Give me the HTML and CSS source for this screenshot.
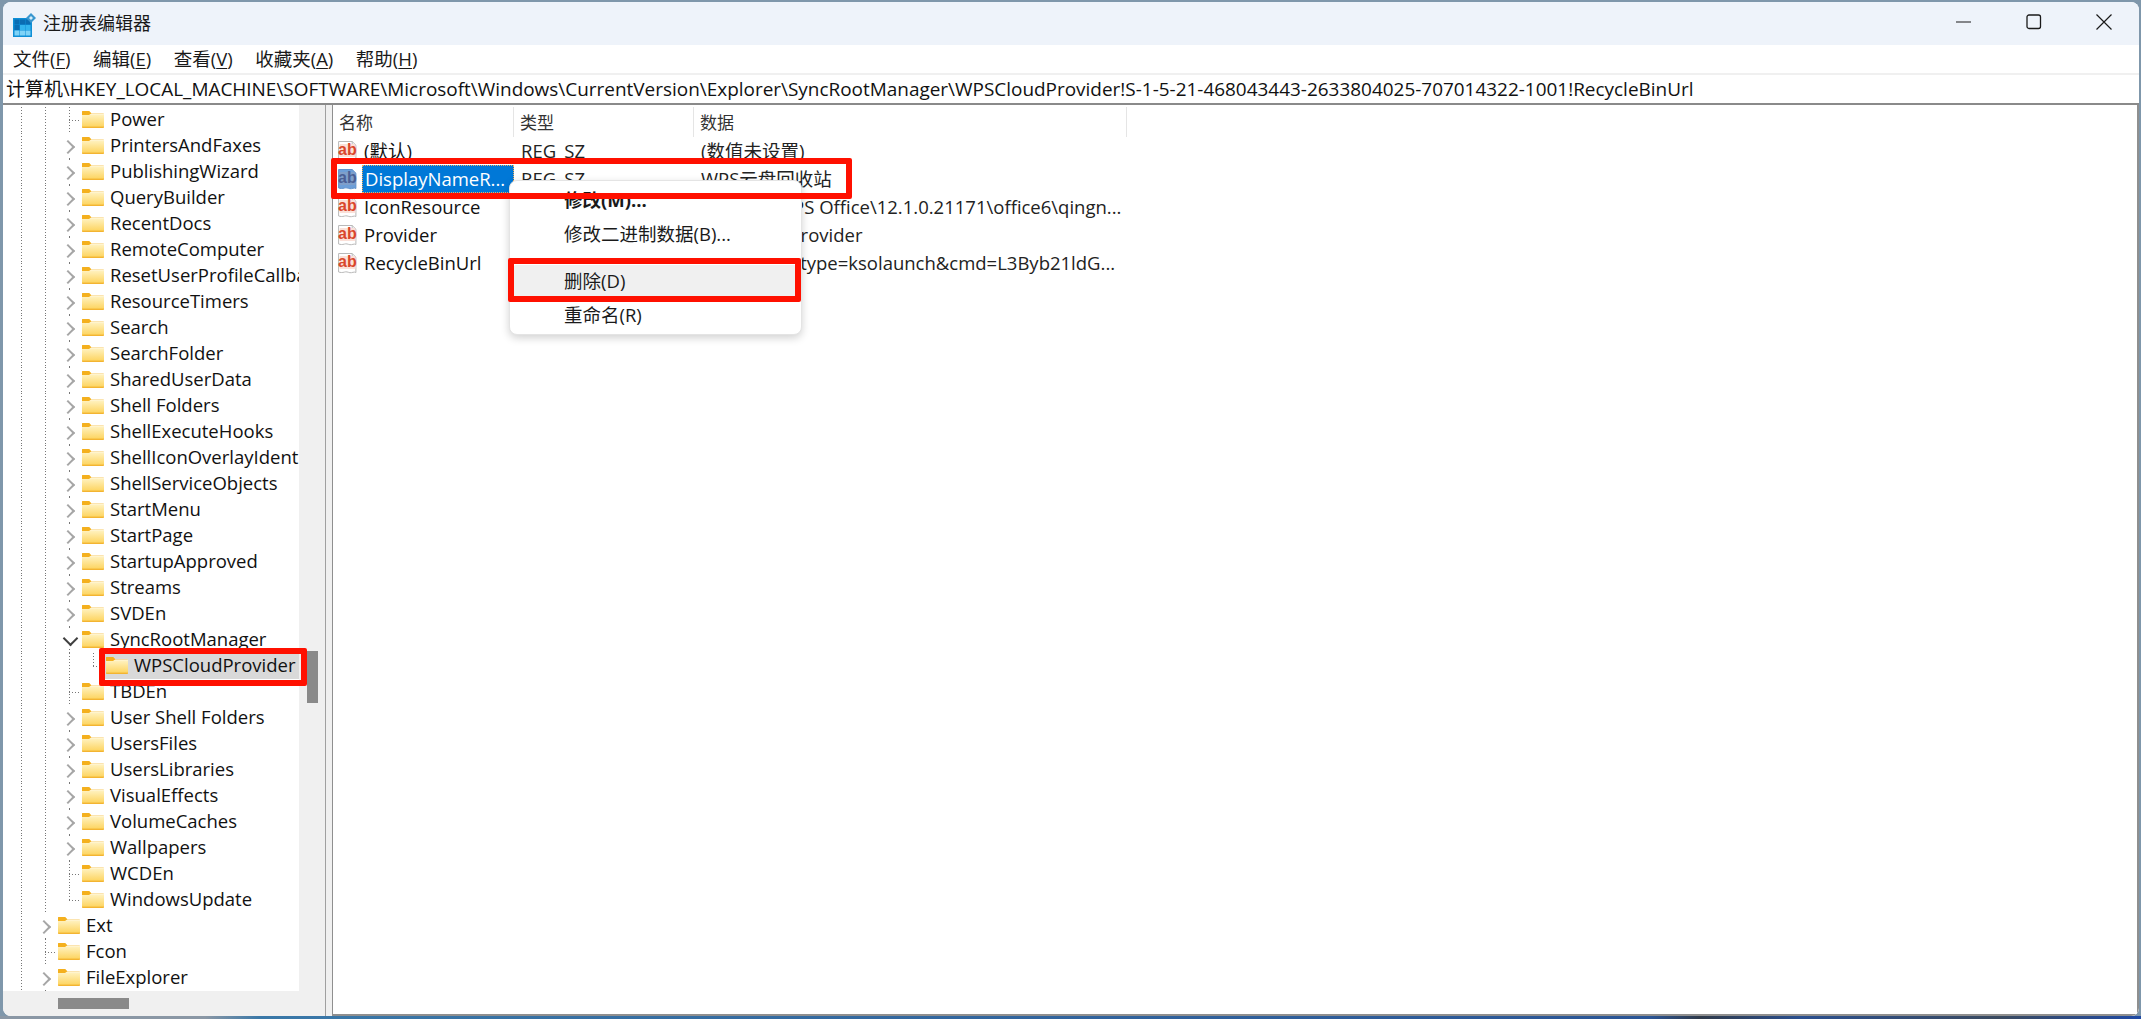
FILE: index.html
```html
<!DOCTYPE html>
<html lang="zh-CN">
<head>
<meta charset="utf-8">
<title>注册表编辑器</title>
<link rel="stylesheet" href="styles.css">
</head>
<body>
<svg class="defs" width="0" height="0" aria-hidden="true">
  <defs>
    <linearGradient id="fg" x1="0" y1="0" x2="0" y2="1">
      <stop offset="0" stop-color="#fff3c4"/>
      <stop offset="1" stop-color="#fdd562"/>
    </linearGradient>
    <symbol id="folder" viewBox="0 0 22 17">
      <path d="M0 1.2C0 .5.5 0 1.2 0H7l2.4 2.4H21c.6 0 1 .4 1 1V16c0 .6-.4 1-1 1H1c-.6 0-1-.4-1-1Z" fill="#f3b431"/>
      <rect x="0" y="3" width="22" height="12.6" fill="url(#fg)"/>
      <rect x="0" y="2.6" width="22" height="1" fill="#fff6d8"/>
      <path d="M0 1.2C0 .5.5 0 1.2 0H7l2.4 2.4H9L7 4H0Z" fill="#f4b01e"/>
    </symbol>
    <symbol id="regsz" viewBox="0 0 19 22">
      <path d="M.6 1.500h13.600l3.700 3.700v15.300c-2-1.200-3.800.6-6 .2-2.300-.5-3.500-1.300-5.500-.6-2 .6-4 .5-5.800-.1Z" fill="#fff" stroke="#b9b9b9"/>
      <path d="M14.200 1.500v3.700h3.700" fill="none" stroke="#b9b9b9"/>
      <rect x="1.500" y="4" width="16" height="13" rx="1" fill="#fbe0d8"/>
    </symbol>
    <symbol id="regsel" viewBox="0 0 19 22">
      <path d="M.6 1.500h13.600l3.700 3.700v15.300c-2-1.200-3.800.6-6 .2-2.300-.5-3.500-1.300-5.500-.6-2 .6-4 .5-5.800-.1Z" fill="#6d9fd8" stroke="#5f91cc"/>
      <rect x="1.500" y="4" width="16" height="13" rx="1" fill="#7f9fca"/>
    </symbol>
  </defs>
</svg>

<div class="window">
  <header class="titlebar">
    <svg class="app-icon" viewBox="0 0 23 24" width="23" height="24">
      <rect x="0" y="5" width="19" height="19" fill="#0f8fd6"/>
      <g fill="#0b6db3">
        <rect x="1.500" y="6.500" width="5" height="5"/><rect x="7" y="6.500" width="5" height="5"/><rect x="12.500" y="6.500" width="5" height="5"/>
        <rect x="1.500" y="12" width="5" height="5"/>
      </g>
      <g fill="#33b4ee">
        <rect x="7" y="12" width="5" height="5"/><rect x="12.500" y="12" width="5" height="5"/>
      </g>
      <g fill="#7fd3f7">
        <rect x="1.500" y="17.500" width="5" height="5"/><rect x="7" y="17.500" width="5" height="5"/><rect x="12.500" y="17.500" width="5" height="5"/>
      </g>
      <path d="M18 0l5 5-5 5-5-5Z" fill="#3a97cf"/>
      <path d="M18 3l2 2-2 2-2-2Z" fill="#d6eefa"/>
    </svg>
    <span class="title-text">注册表编辑器</span>
    <div class="caption">
      <svg class="cap-btn" viewBox="0 0 16 16" width="16" height="16"><path d="M0 8h15" stroke="#1a1a1a" stroke-width="1.200"/></svg>
      <svg class="cap-btn" viewBox="0 0 16 16" width="16" height="16"><rect x="1" y="1" width="13.500" height="13.500" rx="2" fill="none" stroke="#1a1a1a" stroke-width="1.300"/></svg>
      <svg class="cap-btn" viewBox="0 0 16 16" width="16" height="16"><path d="M.5.5l15 15M15.500.5l-15 15" stroke="#1a1a1a" stroke-width="1.200"/></svg>
    </div>
  </header>

  <nav class="menubar">
    <span>文件(<u>F</u>)</span>
    <span>编辑(<u>E</u>)</span>
    <span>查看(<u>V</u>)</span>
    <span>收藏夹(<u>A</u>)</span>
    <span>帮助(<u>H</u>)</span>
  </nav>

  <div class="address">计算机\HKEY_LOCAL_MACHINE\SOFTWARE\Microsoft\Windows\CurrentVersion\Explorer\SyncRootManager\WPSCloudProvider!S-1-5-21-468043443-2633804025-707014322-1001!RecycleBinUrl</div>

  <main class="panes">
    <section class="tree-pane">
      <div class="tree-top">
        <div class="tree" id="tree">
          <div class="row"><i class="g"></i><i class="g"></i><i class="t leaf"></i><svg class="fld"><use href="#folder"/></svg><span>Power</span></div>
          <div class="row"><i class="g"></i><i class="g"></i><i class="t closed"></i><svg class="fld"><use href="#folder"/></svg><span>PrintersAndFaxes</span></div>
          <div class="row"><i class="g"></i><i class="g"></i><i class="t closed"></i><svg class="fld"><use href="#folder"/></svg><span>PublishingWizard</span></div>
          <div class="row"><i class="g"></i><i class="g"></i><i class="t closed"></i><svg class="fld"><use href="#folder"/></svg><span>QueryBuilder</span></div>
          <div class="row"><i class="g"></i><i class="g"></i><i class="t closed"></i><svg class="fld"><use href="#folder"/></svg><span>RecentDocs</span></div>
          <div class="row"><i class="g"></i><i class="g"></i><i class="t closed"></i><svg class="fld"><use href="#folder"/></svg><span>RemoteComputer</span></div>
          <div class="row"><i class="g"></i><i class="g"></i><i class="t closed"></i><svg class="fld"><use href="#folder"/></svg><span>ResetUserProfileCallback</span></div>
          <div class="row"><i class="g"></i><i class="g"></i><i class="t closed"></i><svg class="fld"><use href="#folder"/></svg><span>ResourceTimers</span></div>
          <div class="row"><i class="g"></i><i class="g"></i><i class="t closed"></i><svg class="fld"><use href="#folder"/></svg><span>Search</span></div>
          <div class="row"><i class="g"></i><i class="g"></i><i class="t closed"></i><svg class="fld"><use href="#folder"/></svg><span>SearchFolder</span></div>
          <div class="row"><i class="g"></i><i class="g"></i><i class="t closed"></i><svg class="fld"><use href="#folder"/></svg><span>SharedUserData</span></div>
          <div class="row"><i class="g"></i><i class="g"></i><i class="t closed"></i><svg class="fld"><use href="#folder"/></svg><span>Shell Folders</span></div>
          <div class="row"><i class="g"></i><i class="g"></i><i class="t closed"></i><svg class="fld"><use href="#folder"/></svg><span>ShellExecuteHooks</span></div>
          <div class="row"><i class="g"></i><i class="g"></i><i class="t closed"></i><svg class="fld"><use href="#folder"/></svg><span>ShellIconOverlayIdentifiers</span></div>
          <div class="row"><i class="g"></i><i class="g"></i><i class="t closed"></i><svg class="fld"><use href="#folder"/></svg><span>ShellServiceObjects</span></div>
          <div class="row"><i class="g"></i><i class="g"></i><i class="t closed"></i><svg class="fld"><use href="#folder"/></svg><span>StartMenu</span></div>
          <div class="row"><i class="g"></i><i class="g"></i><i class="t closed"></i><svg class="fld"><use href="#folder"/></svg><span>StartPage</span></div>
          <div class="row"><i class="g"></i><i class="g"></i><i class="t closed"></i><svg class="fld"><use href="#folder"/></svg><span>StartupApproved</span></div>
          <div class="row"><i class="g"></i><i class="g"></i><i class="t closed"></i><svg class="fld"><use href="#folder"/></svg><span>Streams</span></div>
          <div class="row"><i class="g"></i><i class="g"></i><i class="t closed"></i><svg class="fld"><use href="#folder"/></svg><span>SVDEn</span></div>
          <div class="row"><i class="g"></i><i class="g"></i><i class="t open"></i><svg class="fld"><use href="#folder"/></svg><span>SyncRootManager</span></div>
          <div class="row selected-row"><i class="g"></i><i class="g"></i><i class="g"></i><i class="t last"></i><span class="sel"><svg class="fld"><use href="#folder"/></svg><span>WPSCloudProvider</span></span></div>
          <div class="row"><i class="g"></i><i class="g"></i><i class="t leaf"></i><svg class="fld"><use href="#folder"/></svg><span>TBDEn</span></div>
          <div class="row"><i class="g"></i><i class="g"></i><i class="t closed"></i><svg class="fld"><use href="#folder"/></svg><span>User Shell Folders</span></div>
          <div class="row"><i class="g"></i><i class="g"></i><i class="t closed"></i><svg class="fld"><use href="#folder"/></svg><span>UsersFiles</span></div>
          <div class="row"><i class="g"></i><i class="g"></i><i class="t closed"></i><svg class="fld"><use href="#folder"/></svg><span>UsersLibraries</span></div>
          <div class="row"><i class="g"></i><i class="g"></i><i class="t closed"></i><svg class="fld"><use href="#folder"/></svg><span>VisualEffects</span></div>
          <div class="row"><i class="g"></i><i class="g"></i><i class="t closed"></i><svg class="fld"><use href="#folder"/></svg><span>VolumeCaches</span></div>
          <div class="row"><i class="g"></i><i class="g"></i><i class="t closed"></i><svg class="fld"><use href="#folder"/></svg><span>Wallpapers</span></div>
          <div class="row"><i class="g"></i><i class="g"></i><i class="t leaf"></i><svg class="fld"><use href="#folder"/></svg><span>WCDEn</span></div>
          <div class="row"><i class="g"></i><i class="g"></i><i class="t last"></i><svg class="fld"><use href="#folder"/></svg><span>WindowsUpdate</span></div>
          <div class="row"><i class="g"></i><i class="t closed"></i><svg class="fld"><use href="#folder"/></svg><span>Ext</span></div>
          <div class="row"><i class="g"></i><i class="t leaf"></i><svg class="fld"><use href="#folder"/></svg><span>Fcon</span></div>
          <div class="row"><i class="g"></i><i class="t closed"></i><svg class="fld"><use href="#folder"/></svg><span>FileExplorer</span></div>
        </div>
        <div class="vscroll"><div class="vthumb"></div></div>
      </div>
      <div class="hscroll"><div class="hthumb"></div></div>
    </section>

    <div class="splitter"></div>

    <section class="list-pane">
      <div class="list-head">
        <div class="col c1">名称</div>
        <div class="col c2">类型</div>
        <div class="col c3">数据</div>
      </div>
      <div class="lrow">
        <div class="c1 nm"><span class="reg"><svg><use href="#regsz"/></svg><b>ab</b></span><span class="nm-t">(默认)</span></div>
        <div class="c2 v">REG_SZ</div><div class="c3 v">(数值未设置)</div>
      </div>
      <div class="lrow">
        <div class="c1 nm"><span class="reg regsel"><svg><use href="#regsel"/></svg><b>ab</b></span><span class="nm-t picked">DisplayNameR...</span></div>
        <div class="c2 v">REG_SZ</div><div class="c3 v">WPS云盘回收站</div>
      </div>
      <div class="lrow">
        <div class="c1 nm"><span class="reg"><svg><use href="#regsz"/></svg><b>ab</b></span><span class="nm-t">IconResource</span></div>
        <div class="c2 v">REG_SZ</div><div class="c3 v">D:\Apps\WPS Office\12.1.0.21171\office6\qingn...</div>
      </div>
      <div class="lrow">
        <div class="c1 nm"><span class="reg"><svg><use href="#regsz"/></svg><b>ab</b></span><span class="nm-t">Provider</span></div>
        <div class="c2 v">REG_SZ</div><div class="c3 v">WPSCloudProvider</div>
      </div>
      <div class="lrow">
        <div class="c1 nm"><span class="reg"><svg><use href="#regsz"/></svg><b>ab</b></span><span class="nm-t">RecycleBinUrl</span></div>
        <div class="c2 v">REG_SZ</div><div class="c3 v">ksolaunch:/type=ksolaunch&amp;cmd=L3Byb21ldG...</div>
      </div>
    </section>
  </main>

  <div class="ctx">
    <div class="ctx-item strong">修改(M)...</div>
    <div class="ctx-item">修改二进制数据(B)...</div>
    <div class="ctx-sep"></div>
    <div class="ctx-item hover">删除(D)</div>
    <div class="ctx-item">重命名(R)</div>
  </div>

  <div class="mark mark-row"></div>
  <div class="mark mark-del"></div>
  <div class="mark mark-tree"></div>
</div>
</body>
</html>
```
FILE: styles.css
```css
* { box-sizing: border-box; }
html, body { margin: 0; height: 100%; }
body {
  background:
    linear-gradient(to right, #8a97a5 0, #8a97a5 205px, #3a78a8 260px, #2a5596 1650px, #2f3a4a 1700px, #2a4f8f 1800px, #3a4a60 2000px, #1f4aa5 2141px) left bottom / 100% 3px no-repeat,
    #7f97ab;
  padding: 2px 2px 3px 3px;
  overflow: hidden;
  font-family: "Open Sans", "Noto Sans CJK SC", sans-serif;
  font-size: 18.500px;
  color: #111;
}
.defs { position: absolute; }
.window {
  position: relative;
  height: 1014px;
  background: #fff;
  border-radius: 8px;
  overflow: hidden;
  display: flex;
  flex-direction: column;
}
.titlebar {
  height: 43px;
  background: #eef3fa;
  display: flex;
  align-items: center;
  padding-left: 10px;
  flex: none;
}
.app-icon { flex: none; margin-top: 2px; }
.title-text { margin-left: 7px; padding-bottom: 3px; font-size: 18px; font-family: "Noto Sans CJK SC", sans-serif; color: #1a1a1a; }
.caption { margin-left: auto; display: flex; align-items: center; gap: 54px; padding: 0 27px 3px 0; }
.cap-btn { display: block; }
.menubar {
  height: 28px;
  flex: none;
  display: flex;
  align-items: center;
  padding: 0 0 2px 10px;
  background: #fff;
  color: #1a1a1a;
}
.menubar span { margin-right: 22.500px; }
.menubar u { text-underline-offset: 2px; }
.address {
  height: 32px;
  flex: none;
  border-top: 2px solid #f0f0f0;
  border-bottom: 2px solid #8a8a8a;
  padding-left: 3px;
  font-size: 18.950px;
  line-height: 29px;
  white-space: nowrap;
  overflow: hidden;
  background: #fff;
}
.panes { flex: 1; display: flex; min-height: 0; }
.tree-pane {
  width: 323px;
  flex: none;
  display: flex;
  flex-direction: column;
  border-right: 1px solid #a0a0a0;
  background: #f0f0f0;
}
.tree-top { flex: 1; display: flex; min-height: 0; }
.tree {
  width: 296px;
  flex: none;
  background: #fff;
  overflow: hidden;
  padding-top: 2px;
}
.row {
  height: 26px;
  display: flex;
  align-items: center;
  white-space: nowrap;
  padding-left: 6px;
}
.row span span, .row > span:not(.sel) { padding-bottom: 3px; }
.row > span { margin-left: 6px; }
.g, .t { display: block; width: 24px; height: 26px; flex: none; position: relative; }
.g { background: repeating-linear-gradient(to bottom, #777 0 1px, transparent 1px 3px) 12px 0 / 1px 100% no-repeat; }
.t.leaf {
  background:
    repeating-linear-gradient(to bottom, #777 0 1px, transparent 1px 3px) 12px 0 / 1px 100% no-repeat,
    repeating-linear-gradient(to right, #777 0 1px, transparent 1px 3px) 12px 13px / 11px 1px no-repeat;
}
.t.last {
  background:
    repeating-linear-gradient(to bottom, #777 0 1px, transparent 1px 3px) 12px 0 / 1px 14px no-repeat,
    repeating-linear-gradient(to right, #777 0 1px, transparent 1px 3px) 12px 13px / 11px 1px no-repeat;
}
.t.closed::before {
  content: "";
  position: absolute;
  left: 6px;
  top: 9px;
  width: 8px;
  height: 8px;
  border-top: 2px solid #a6a6a6;
  border-right: 2px solid #a6a6a6;
  transform: rotate(45deg);
}
.t.open::before {
  content: "";
  position: absolute;
  left: 8px;
  top: 6px;
  width: 9px;
  height: 9px;
  border-bottom: 2px solid #404040;
  border-right: 2px solid #404040;
  transform: rotate(45deg);
}
.t.closed::after {
  content: "";
  position: absolute;
  left: 12px;
  top: 25px;
  width: 1px;
  height: 2px;
  background: #777;
}
.t.open::after {
  content: "";
  position: absolute;
  left: 12px;
  top: 22px;
  width: 1px;
  height: 4px;
  background: repeating-linear-gradient(to bottom, #777 0 1px, transparent 1px 3px);
}
.fld { width: 22px; height: 17px; flex: none; display: block; margin: 0 0 2px 1px; }
.sel {
  display: flex;
  align-items: center;
  gap: 6px;
  background: #d9d9d9;
  height: 26px;
  flex: 1;
  margin-left: -1px !important;
  padding-left: 1px;
}
.vscroll { flex: 1; position: relative; padding-top: 546px; }
.vthumb { width: 11px; height: 52px; background: #8a8a8a; margin-left: 8px; }
.hscroll { height: 25px; flex: none; padding: 7px 0 0 55px; }
.hthumb { width: 71px; height: 11px; background: #8a8a8a; }
.splitter { width: 6px; flex: none; background: #f0f0f0; }
.list-pane { flex: 1; border-left: 1px solid #8f8f8f; border-right: 2px solid #8f8f8f; border-bottom: 2px solid #8f8f8f; background: #fff; padding-top: 2px; min-width: 0; }
.list-head { height: 30px; display: flex; align-items: center; }
.c1 { width: 181px; flex: none; }
.c2 { width: 180px; flex: none; }
.c3 { width: 433px; flex: none; }
.col { height: 30px; line-height: 30px; padding-left: 6px; border-right: 1px solid #e5e5e5; color: #333; font-family: "Noto Sans CJK SC", sans-serif; font-size: 17px; }
.lrow { height: 28px; display: flex; align-items: center; white-space: nowrap; }
.nm { display: flex; align-items: center; padding-left: 5px; height: 28px; }
.reg { position: relative; display: block; width: 19px; height: 22px; flex: none; }
.reg svg { display: block; width: 19px; height: 22px; }
.reg b {
  position: absolute;
  left: 0;
  right: 1px;
  top: 0;
  text-align: center;
  font: 700 16px/20px "Liberation Sans", sans-serif;
  color: #d9472b;
}
.regsel b { color: #4a5f95; }
.nm-t { margin-left: 7px; padding-bottom: 2px; }
.nm-t.picked {
  flex: 1;
  margin-left: 5px;
  padding: 0 0 0 3px;
  background: #0078d7;
  color: #fff;
  height: 28px;
  line-height: 27px;
  outline: 1px dotted #f0b060;
  outline-offset: -1px;
}
.v { padding-left: 7px; padding-bottom: 2px; color: #222; overflow: hidden; }
.ctx {
  position: absolute;
  left: 506px;
  top: 178px;
  width: 293px;
  height: 155px;
  background: #fff;
  border: 1px solid #e4e4e4;
  border-radius: 8px;
  box-shadow: 0 3px 8px rgba(0, 0, 0, .18);
  padding-top: 3px;
  color: #1a1a1a;
}
.ctx-item { height: 34px; line-height: 32px; padding-left: 51px; margin: 0 3px; border-radius: 4px; }
.ctx-item.strong { font-weight: 700; }
.ctx-item.hover { background: #f0f0f0; }
.ctx-sep { height: 13px; }
.mark { position: absolute; border: 6px solid #ff1000; border-radius: 2px; pointer-events: none; }
.mark-row { left: 328px; top: 156px; width: 521px; height: 41px; }
.mark-del { left: 505px; top: 256px; width: 293px; height: 44px; }
.mark-tree { left: 96px; top: 646px; width: 208px; height: 38px; }
```
